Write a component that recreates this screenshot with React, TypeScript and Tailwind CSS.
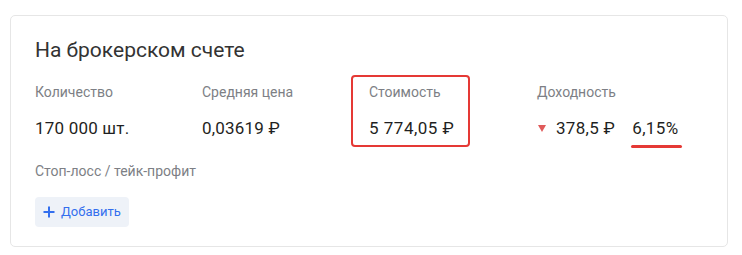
import React from 'react'

const font = { fontFamily: 'Roboto, "Liberation Sans", sans-serif' }

const App = () => {
  return (
    <div className="w-[742px] h-[255px] bg-white pt-[15px] pl-[10px]" style={font}>
      <div className="w-[718px] h-[232px] border border-[#e6e6e6] rounded-[5px] pl-[24px] pt-[20px]">
        <h1 className="text-[21px] leading-[28px] text-[#333333]">На брокерском счете</h1>

        <div className="grid grid-cols-[167px_167px_168px_1fr] mt-[18px]">
          <div>
            <p className="text-[14px] leading-[20px] text-[#7d7f85]">Количество</p>
            <p className="text-[17px] leading-[24px] tracking-[0.2px] text-[#1f1f22] mt-[14px]">170 000 шт.</p>
          </div>
          <div>
            <p className="text-[14px] leading-[20px] text-[#7d7f85]">Средняя цена</p>
            <p className="text-[17px] leading-[24px] tracking-[0.2px] text-[#1f1f22] mt-[14px]">0,03619 ₽</p>
          </div>
          <div className="relative">
            <div className="absolute -left-[18px] -top-[7px] w-[119px] h-[72px] border-[2.5px] border-[#e53935] rounded-[4px]"></div>
            <p className="text-[14px] leading-[20px] text-[#7d7f85]">Стоимость</p>
            <p className="text-[17px] leading-[24px] tracking-[0.5px] text-[#1f1f22] mt-[14px]">5 774,05 ₽</p>
          </div>
          <div>
            <p className="text-[14px] leading-[20px] text-[#7d7f85]">Доходность</p>
            <div className="flex items-center mt-[14px]">
              <svg width="8" height="7" viewBox="0 0 8 7" className="ml-[1px] mr-[10px]">
                <polygon points="0,0 8,0 4,7" fill="#e05a5a" />
              </svg>
              <span className="text-[17px] leading-[24px] tracking-[0.3px] text-[#1f1f22]">378,5 ₽</span>
              <span className="relative ml-[17px] text-[17px] leading-[24px] tracking-[0.4px] text-[#1f1f22]">
                6,15%
                <span className="absolute left-[-1px] right-[-3px] top-[29px] h-[3px] bg-[#e53935] rounded-full"></span>
              </span>
            </div>
          </div>
        </div>

        <p className="text-[14px] leading-[20px] text-[#7d7f85] mt-[21px]">Стоп-лосс / тейк-профит</p>
        <button className="mt-[16px] h-[30px] px-[8px] flex items-center gap-[6px] rounded-[4px] bg-[#eef2f8] text-[#336fee] text-[13px]">
          <svg width="12" height="12" viewBox="0 0 12 12">
            <path d="M6 0.5V11.5M0.5 6H11.5" stroke="#336fee" strokeWidth="2" />
          </svg>
          Добавить
        </button>
      </div>
    </div>
  )
}

export default App
